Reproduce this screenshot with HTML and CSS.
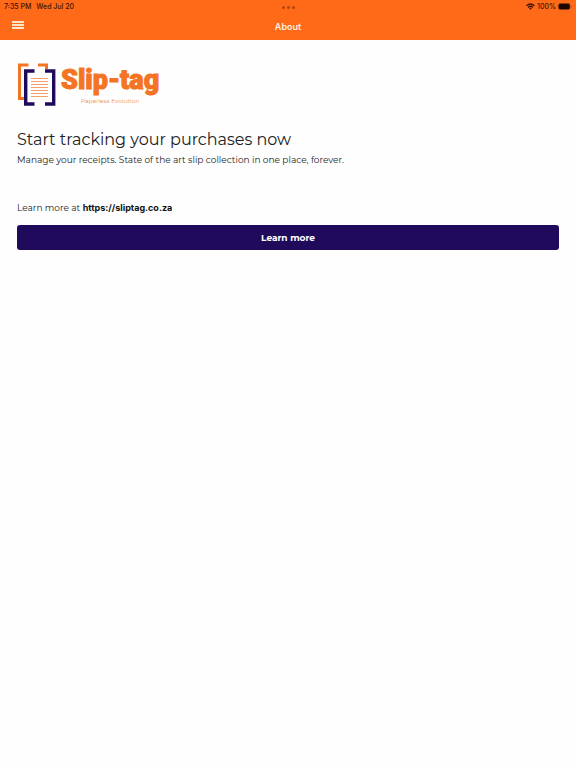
FILE: index.html
```html
<!DOCTYPE html>
<html lang="en">
<head>
    <meta charset="UTF-8">
    <meta name="viewport" content="width=device-width, initial-scale=1.0">
    <title>About</title>
    <link rel="stylesheet" href="styles.css">
</head>
<body>
    <header class="header">
        <div class="status-bar">
            <div class="status-left">
                <span>7:35 PM</span>
                <span>Wed Jul 20</span>
            </div>
            <div class="dots"><i></i><i></i><i></i></div>
            <div class="status-right">
                <svg width="9" height="7" viewBox="0 0 18 14" fill="none" stroke="#401400" stroke-width="2.6">
                    <path d="M1 5.5Q9-1.5 17 5.5M4.2 8.8Q9 4.4 13.8 8.8"/>
                    <path d="M6.4 10.8Q9 8.6 11.6 10.8L9 13.6Z" fill="#401400" stroke="none"/>
                </svg>
                <span>100%</span>
                <svg width="14" height="7" viewBox="0 0 14 7">
                    <rect x=".5" y=".5" width="11.5" height="6" rx="1.8" fill="#1c0800" stroke="#8f3a0c" stroke-width=".7"/>
                    <path d="M13 2.3Q14 3.5 13 4.7Z" fill="#8f3a0c"/>
                </svg>
            </div>
        </div>
        <div class="toolbar">
            <button class="menu-button" aria-label="Menu"><i></i><i></i><i></i></button>
            <h1 class="title">About</h1>
        </div>
    </header>

    <main class="content">
        <div class="logo">
            <svg class="logo-mark" width="40" height="44" viewBox="0 0 40 44" fill="none">
                <g stroke="#f47424" stroke-width="3">
                    <path d="M11.5 3H2.5V36.5H7"/>
                    <path d="M21 3H29.5V7"/>
                </g>
                <g stroke="#1f0a5c" stroke-width="3.4">
                    <path d="M17.5 9H8.7V42H17.5"/>
                    <path d="M28 9H36.7V42H28"/>
                </g>
                <path d="M14 16.5H31M14 19.5H31M14 22.5H31M14 25.5H31M14 28.5H31M14 31.5H31M14 34.5H31" stroke="#f0a068"/>
            </svg>
            <div class="logo-text">
                <span class="logo-name">Slip-tag</span>
                <span class="logo-tagline">Paperless Evolution</span>
            </div>
        </div>

        <h2 class="heading">Start tracking your purchases now</h2>
        <p class="lead">Manage your receipts. State of the art slip collection in one place, forever.</p>

        <p class="more">Learn more at <a href="https://sliptag.co.za">https://sliptag.co.za</a></p>
        <button class="learn-button">Learn more</button>
    </main>
</body>
</html>
```
FILE: styles.css
```css
:root {
    --orange: #ff6a18;
    --navy: #1f0a5c;
}

* {
    box-sizing: border-box;
    margin: 0;
    padding: 0;
}

body {
    min-height: 100vh;
    background: #fefefe;
    color: #222;
    font-family: Montserrat, Inter, sans-serif;
    font-size: 9px;
}

button {
    border: none;
    cursor: pointer;
    font-family: inherit;
}

.header {
    background: var(--orange);
}

.status-bar {
    display: grid;
    grid-template-columns: 1fr auto 1fr;
    align-items: center;
    height: 12px;
    padding: 0 4px;
    color: #401400;
    font-family: Inter, sans-serif;
    font-size: 7px;
    font-weight: 500;
}

.status-left {
    display: flex;
    gap: 5px;
}

.status-right {
    display: flex;
    align-items: center;
    justify-content: flex-end;
    gap: 2px;
}

.dots {
    display: flex;
    gap: 2px;
    padding-top: 2px;
}

.dots i {
    width: 3px;
    height: 3px;
    border-radius: 50%;
    background: #b5440c;
}

.toolbar {
    display: grid;
    grid-template-columns: 1fr auto 1fr;
    align-items: center;
    height: 28px;
    padding: 0 12px;
}

.menu-button {
    display: flex;
    flex-direction: column;
    justify-self: start;
    gap: 1px;
    padding-bottom: 3px;
    background: none;
}

.menu-button i {
    width: 12px;
    height: 2px;
    background: #ffe6c8;
}

.title {
    color: #ffeedd;
    font-family: Inter, sans-serif;
    font-size: 9px;
    font-weight: 600;
}

.content {
    padding: 22px 17px;
}

.logo {
    display: flex;
    gap: 4px;
}

.logo-text {
    display: flex;
    flex-direction: column;
    align-items: center;
    padding-top: 1px;
}

.logo-name {
    color: #f47424;
    font-family: Roboto, sans-serif;
    font-size: 27px;
    font-weight: 900;
    line-height: 34px;
    -webkit-text-stroke: 1px #f47424;
}

.logo-tagline {
    color: #f08c50;
    font-size: 6px;
    line-height: 8px;
}

.heading {
    margin-top: 22px;
    font-size: 16px;
    font-weight: 400;
    line-height: 24px;
}

.lead {
    margin-top: 2px;
    line-height: 12px;
}

.more {
    margin-top: 36px;
    line-height: 12px;
}

.more a {
    color: #111;
    font-family: Inter, sans-serif;
    font-weight: 700;
    text-decoration: none;
}

.learn-button {
    width: 100%;
    height: 25px;
    margin-top: 11px;
    border-radius: 3px;
    background: var(--navy);
    color: #fff;
    font-size: 9px;
    font-weight: 700;
}
```
